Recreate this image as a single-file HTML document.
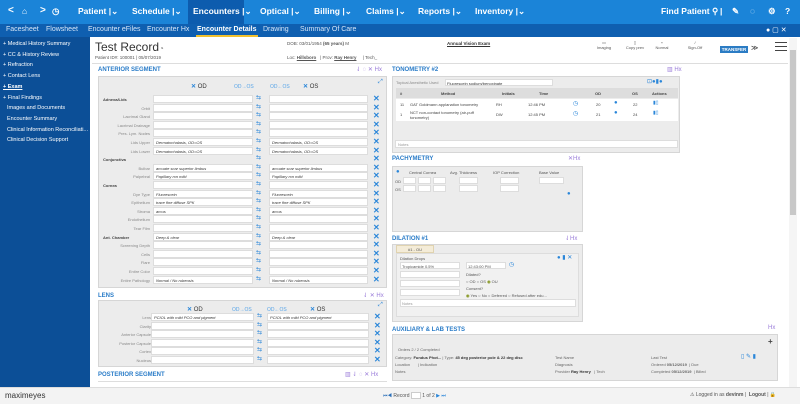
<!DOCTYPE html>
<html><head><meta charset="utf-8"><style>
*{box-sizing:border-box;margin:0;padding:0}
body{width:800px;height:404px;overflow:hidden;font-family:"Liberation Sans",sans-serif;background:#fff;position:relative;color:#333}
.a{position:absolute}
.top{left:0;top:0;width:800px;height:24px;background:#1b84d8}
.top span{position:absolute;top:6px;color:#fff;font-size:8.5px;font-weight:bold}
.sub{left:0;top:24px;width:800px;height:13px;background:#0f5fb0}
.sub span{position:absolute;top:2px;color:#d6e6f7;font-size:7px}
.side{left:0;top:37px;width:90px;height:350px;background:#0c4f97}
.side div{position:absolute;left:3px;color:#fff;font-size:5.5px;white-space:nowrap}
.foot{left:0;top:387px;width:800px;height:17px;background:#f3f3f3;border-top:1px solid #ddd}
.t{font-size:6px;color:#2a7cc8;font-weight:bold}
.panel{background:#ececec;border:1px solid #d6d6d6}
.r{position:absolute;left:0;width:289px;height:8px}
.l{position:absolute;left:0;width:52px;text-align:right;font-size:4px;color:#888;top:2px}
.s{position:absolute;left:5px;font-size:4px;color:#444;top:2px;font-weight:bold}
.in{position:absolute;top:0;height:8px;background:#fff;border:1px solid #ddd;font-size:4px;color:#333;padding:1px 2px;white-space:nowrap;overflow:hidden}
.ar{position:absolute;top:1px;left:158px;width:8px;height:5px;color:#2a86d9;font-size:6px;line-height:5px}
.x{position:absolute;top:0;left:275px;color:#2a86d9;font-size:8px;line-height:8px;font-weight:bold}
.sm{font-size:4.5px;color:#555}
.fi{position:absolute;background:#fff;border:1px solid #ddd}
</style></head><body>
<div class="a top">
<span style="left:8px;font-size:10px;top:5px">&lt;</span><span style="left:22px">⌂</span><span style="left:40px;font-size:10px;top:5px">&gt;</span><span style="left:52px">◷</span>
<span style="left:78px">Patient |⌄</span><span style="left:132px">Schedule |⌄</span>
<div class="a" style="left:188px;top:0;width:56px;height:24px;background:#0d5cae"></div>
<span style="left:193px">Encounters |⌄</span><span style="left:260px">Optical |⌄</span><span style="left:314px">Billing |⌄</span><span style="left:366px">Claims |⌄</span><span style="left:418px">Reports |⌄</span><span style="left:475px">Inventory |⌄</span>
<span style="left:661px">Find Patient ⚲</span><span style="left:720px">|</span><span style="left:732px">✎</span><span style="left:750px">◌</span><span style="left:768px">⚙</span><span style="left:785px">?</span>
</div>
<div class="a sub">
<span style="left:6px">Facesheet</span><span style="left:46px">Flowsheet</span><span style="left:88px">Encounter eFiles</span><span style="left:147px">Encounter Hx</span>
<span style="left:197px;color:#fff;font-weight:bold">Encounter Details</span><div class="a" style="left:196px;top:11px;width:62px;height:2px;background:#f2c12e"></div>
<span style="left:263px">Drawing</span><span style="left:300px">Summary Of Care</span>
<span style="left:766px;color:#fff">● ▢ ✕</span>
</div>
<div class="a side">
<div style="top:4px">+ Medical History Summary</div><div style="top:15px">+ CC &amp; History Review</div><div style="top:25px">+ Refraction</div><div style="top:36px">+ Contact Lens</div><div style="top:47px;font-weight:bold;text-decoration:underline">+ Exam</div><div style="top:58px">+ Final Findings</div>
<div style="top:68px;left:7px">Images and Documents</div><div style="top:79px;left:7px">Encounter Summary</div><div style="top:90px;left:7px">Clinical Information Reconciliati...</div><div style="top:100px;left:7px">Clinical Decision Support</div>
</div>
<div class="a" style="left:95px;top:40px;font-size:12px;color:#333">Test Record<span style="font-size:8px;color:#888">◔</span></div>
<div class="a sm" style="left:95px;top:55px">Patient ID#: 100001 | 05/07/2019</div>
<div class="a sm" style="left:287px;top:41px">DOB: 03/01/1954 <b>(65 years)</b> M</div>
<div class="a sm" style="left:287px;top:55px">Loc: <b><u>Hillsboro</u></b> &nbsp;&nbsp;| Prov: <b><u>Ray Henry</u></b> &nbsp;&nbsp;&nbsp;&nbsp;| Tech_</div>
<div class="a sm" style="left:447px;top:41px;font-weight:bold;text-decoration:underline;color:#333">Annual Vision Exam</div>
<div class="a sm" style="left:593px;top:40px;text-align:center;width:22px;font-size:4px">▭<br>Imaging</div>
<div class="a sm" style="left:622px;top:40px;text-align:center;width:26px;font-size:4px">▯<br>Copy prev</div>
<div class="a sm" style="left:652px;top:40px;text-align:center;width:20px;font-size:4px">⌁<br>Normal</div>
<div class="a sm" style="left:684px;top:40px;text-align:center;width:22px;font-size:4px">/<br>Sign-Off</div>
<div class="a" style="left:720px;top:46px;width:28px;height:7px;background:#2b7cc4;color:#fff;font-size:4.5px;font-weight:bold;text-align:center;line-height:7px">TRANSFER</div>
<div class="a" style="left:751px;top:44px;font-size:7px;color:#333">≫</div>
<div class="a" style="left:775px;top:42px;width:12px;height:9px;border-top:1.5px solid #444;border-bottom:1.5px solid #444"><div class="a" style="top:2.5px;left:0;width:12px;height:1.5px;background:#444"></div></div>
<div class="a" style="left:92px;top:63px;width:696px;height:1px;background:#ddd"></div>

<!-- Anterior -->
<div class="a t" style="left:98px;top:67px">ANTERIOR SEGMENT</div>
<div class="a" style="left:356px;top:66px;font-size:6px;color:#9a7cd9">⇃ ◌ ✕ Hx</div>
<div class="a panel" style="left:98px;top:76px;width:289px;height:212px">
<div class="a" style="left:92px;top:6px;font-size:6px"><b style="color:#2a86d9">✕</b> OD</div>
<div class="a" style="left:135px;top:7px;font-size:5px;color:#59a5e8">OD→OS</div>
<div class="a" style="left:171px;top:7px;font-size:5px;color:#59a5e8">OD←OS</div>
<div class="a" style="left:204px;top:6px;font-size:6px"><b style="color:#2a86d9">✕</b> OS</div>
<div class="a" style="left:279px;top:2px;font-size:6px;color:#2a86d9">⤢</div>
</div>
<div class="a" style="left:98px;top:95px;width:289px;height:190px">
<div class="r" style="top:0"><span class="s">Adnexa/Lids</span><i class="in" style="left:55px;width:100px"></i><span class="ar">⇆</span><i class="in" style="left:171px;width:99px"></i><b class="x">✕</b></div>
<div class="r" style="top:8.6px"><span class="l">Orbit</span><i class="in" style="left:55px;width:100px"></i><span class="ar">⇆</span><i class="in" style="left:171px;width:99px"></i><b class="x">✕</b></div>
<div class="r" style="top:17.2px"><span class="l">Lacrimal Gland</span><i class="in" style="left:55px;width:100px"></i><span class="ar">⇆</span><i class="in" style="left:171px;width:99px"></i><b class="x">✕</b></div>
<div class="r" style="top:25.8px"><span class="l">Lacrimal Drainage</span><i class="in" style="left:55px;width:100px"></i><span class="ar">⇆</span><i class="in" style="left:171px;width:99px"></i><b class="x">✕</b></div>
<div class="r" style="top:34.4px"><span class="l">Pres. Lym. Nodes</span><i class="in" style="left:55px;width:100px"></i><span class="ar">⇆</span><i class="in" style="left:171px;width:99px"></i><b class="x">✕</b></div>
<div class="r" style="top:43px"><span class="l">Lids Upper</span><i class="in" style="left:55px;width:100px">Dermatochalasis, OD=OS</i><span class="ar">⇆</span><i class="in" style="left:171px;width:99px">Dermatochalasis, OD=OS</i><b class="x">✕</b></div>
<div class="r" style="top:51.6px"><span class="l">Lids Lower</span><i class="in" style="left:55px;width:100px">Dermatochalasis, OD=OS</i><span class="ar">⇆</span><i class="in" style="left:171px;width:99px">Dermatochalasis, OD=OS</i><b class="x">✕</b></div>
<div class="r" style="top:60.2px"><span class="s">Conjunctiva</span><span class="ar">⇆</span><b class="x">✕</b></div>
<div class="r" style="top:68.8px"><span class="l">Bulbar</span><i class="in" style="left:55px;width:100px">arcuate scar superior limbus</i><span class="ar">⇆</span><i class="in" style="left:171px;width:99px">arcuate scar superior limbus</i><b class="x">✕</b></div>
<div class="r" style="top:77.4px"><span class="l">Palpebral</span><i class="in" style="left:55px;width:100px">Papillary rxn mild</i><span class="ar">⇆</span><i class="in" style="left:171px;width:99px">Papillary rxn mild</i><b class="x">✕</b></div>
<div class="r" style="top:86px"><span class="s">Cornea</span><i class="in" style="left:55px;width:100px"></i><span class="ar">⇆</span><i class="in" style="left:171px;width:99px"></i><b class="x">✕</b></div>
<div class="r" style="top:94.6px"><span class="l">Dye Type</span><i class="in" style="left:55px;width:100px">Fluorescein</i><span class="ar">⇆</span><i class="in" style="left:171px;width:99px">Fluorescein</i><b class="x">✕</b></div>
<div class="r" style="top:103.2px"><span class="l">Epithelium</span><i class="in" style="left:55px;width:100px">trace fine diffuse SPK</i><span class="ar">⇆</span><i class="in" style="left:171px;width:99px">trace fine diffuse SPK</i><b class="x">✕</b></div>
<div class="r" style="top:111.8px"><span class="l">Stroma</span><i class="in" style="left:55px;width:100px">arcus</i><span class="ar">⇆</span><i class="in" style="left:171px;width:99px">arcus</i><b class="x">✕</b></div>
<div class="r" style="top:120.4px"><span class="l">Endothelium</span><i class="in" style="left:55px;width:100px"></i><span class="ar">⇆</span><i class="in" style="left:171px;width:99px"></i><b class="x">✕</b></div>
<div class="r" style="top:129px"><span class="l">Tear Film</span><i class="in" style="left:55px;width:100px"></i><span class="ar">⇆</span><i class="in" style="left:171px;width:99px"></i><b class="x">✕</b></div>
<div class="r" style="top:137.6px"><span class="s">Ant. Chamber</span><i class="in" style="left:55px;width:100px">Deep &amp; clear</i><span class="ar">⇆</span><i class="in" style="left:171px;width:99px">Deep &amp; clear</i><b class="x">✕</b></div>
<div class="r" style="top:146.2px"><span class="l">Screening Depth</span><i class="in" style="left:55px;width:100px"></i><span class="ar">⇆</span><i class="in" style="left:171px;width:99px"></i><b class="x">✕</b></div>
<div class="r" style="top:154.8px"><span class="l">Cells</span><i class="in" style="left:55px;width:100px"></i><span class="ar">⇆</span><i class="in" style="left:171px;width:99px"></i><b class="x">✕</b></div>
<div class="r" style="top:163.4px"><span class="l">Flare</span><i class="in" style="left:55px;width:100px"></i><span class="ar">⇆</span><i class="in" style="left:171px;width:99px"></i><b class="x">✕</b></div>
<div class="r" style="top:172px"><span class="l">Entire Color</span><i class="in" style="left:55px;width:100px"></i><span class="ar">⇆</span><i class="in" style="left:171px;width:99px"></i><b class="x">✕</b></div>
<div class="r" style="top:180.6px"><span class="l">Entire Pathology</span><i class="in" style="left:55px;width:100px">Normal / No rubeosis</i><span class="ar">⇆</span><i class="in" style="left:171px;width:99px">Normal / No rubeosis</i><b class="x">✕</b></div>
</div>

<!-- Lens -->
<div class="a t" style="left:98px;top:293px">LENS</div>
<div class="a" style="left:363px;top:292px;font-size:6px;color:#9a7cd9">⇃ ✕ Hx</div>
<div class="a panel" style="left:98px;top:300px;width:289px;height:67px">
<div class="a" style="left:88px;top:5px;font-size:6px"><b style="color:#2a86d9">✕</b> OD</div>
<div class="a" style="left:133px;top:6px;font-size:5px;color:#59a5e8">OD→OS</div>
<div class="a" style="left:168px;top:6px;font-size:5px;color:#59a5e8">OD←OS</div>
<div class="a" style="left:211px;top:5px;font-size:6px"><b style="color:#2a86d9">✕</b> OS</div>
<div class="a" style="left:279px;top:1px;font-size:6px;color:#2a86d9">⤢</div>
<div class="r" style="top:12px"><span class="l">Lens</span><i class="in" style="left:52px;width:103px">PCIOL with mild PCO and pigment</i><span class="ar">⇆</span><i class="in" style="left:168px;width:102px">PCIOL with mild PCO and pigment</i><b class="x">✕</b></div>
<div class="r" style="top:20.6px"><span class="l">Clarity</span><i class="in" style="left:52px;width:103px"></i><span class="ar">⇆</span><i class="in" style="left:168px;width:102px"></i><b class="x">✕</b></div>
<div class="r" style="top:29.2px"><span class="l">Anterior Capsule</span><i class="in" style="left:52px;width:103px"></i><span class="ar">⇆</span><i class="in" style="left:168px;width:102px"></i><b class="x">✕</b></div>
<div class="r" style="top:37.8px"><span class="l">Posterior Capsule</span><i class="in" style="left:52px;width:103px"></i><span class="ar">⇆</span><i class="in" style="left:168px;width:102px"></i><b class="x">✕</b></div>
<div class="r" style="top:46.4px"><span class="l">Cortex</span><i class="in" style="left:52px;width:103px"></i><span class="ar">⇆</span><i class="in" style="left:168px;width:102px"></i><b class="x">✕</b></div>
<div class="r" style="top:55px"><span class="l">Nucleus</span><i class="in" style="left:52px;width:103px"></i><span class="ar">⇆</span><i class="in" style="left:168px;width:102px"></i><b class="x">✕</b></div>
</div>
<div class="a t" style="left:98px;top:372px">POSTERIOR SEGMENT</div>
<div class="a" style="left:345px;top:371px;font-size:6px;color:#9a7cd9">▥ ⇃ ◌ ✕ Hx</div>
<div class="a" style="left:98px;top:381px;width:289px;height:1px;background:#ddd"></div>

<!-- Tonometry -->
<div class="a t" style="left:392px;top:67px">TONOMETRY #2</div>
<div class="a" style="left:667px;top:66px;font-size:6px;color:#9a7cd9">▥ Hx</div>
<div class="a panel" style="left:392px;top:76px;width:288px;height:77px">
<div class="a" style="left:3px;top:3px;font-size:4px;color:#888">Topical Anesthetic Used</div>
<div class="fi" style="left:52px;top:2px;width:108px;height:7px;font-size:4px;padding:1px">Fluorescein sodium/benoxinate</div>
<div class="a" style="left:254px;top:1px;font-size:6px;color:#2a86d9">⊡●▮●</div>
<div class="a" style="left:3px;top:11px;width:282px;height:10px;background:#ddd;font-size:4px;font-weight:bold;color:#444">
<span class="a" style="left:4px;top:3px">#</span><span class="a" style="left:45px;top:3px">Method</span><span class="a" style="left:106px;top:3px">Initials</span><span class="a" style="left:143px;top:3px">Time</span><span class="a" style="left:199px;top:3px">OD</span><span class="a" style="left:236px;top:3px">OS</span><span class="a" style="left:256px;top:3px">Actions</span></div>
<div class="a" style="left:3px;top:22px;width:282px;height:22px;background:#fff;font-size:4px;color:#444">
<span class="a" style="left:4px;top:3px">11</span><span class="a" style="left:14px;top:3px">GAT Goldmann applanation tonometry</span><span class="a" style="left:100px;top:3px">RH</span><span class="a" style="left:132px;top:3px">12:46 PM</span><span class="a" style="left:177px;top:1px;color:#2a86d9;font-size:6px">◷</span><span class="a" style="left:200px;top:3px">20</span><span class="a" style="left:218px;top:1px;color:#2a86d9;font-size:6px">●</span><span class="a" style="left:237px;top:3px">22</span><span class="a" style="left:257px;top:1px;color:#2a86d9;font-size:5px">▮▯</span>
<span class="a" style="left:4px;top:13px">1</span><span class="a" style="left:14px;top:11px;width:80px">NCT non-contact tonometry (air-puff tonometry)</span><span class="a" style="left:100px;top:13px">DW</span><span class="a" style="left:132px;top:13px">12:45 PM</span><span class="a" style="left:177px;top:11px;color:#2a86d9;font-size:6px">◷</span><span class="a" style="left:200px;top:13px">21</span><span class="a" style="left:218px;top:11px;color:#2a86d9;font-size:6px">●</span><span class="a" style="left:237px;top:13px">24</span><span class="a" style="left:257px;top:11px;color:#2a86d9;font-size:5px">▮▯</span></div>
<div class="fi" style="left:2px;top:63px;width:283px;height:8px;font-size:4px;color:#999;padding:1px 2px">Notes</div>
</div>

<!-- Pachymetry -->
<div class="a t" style="left:392px;top:156px">PACHYMETRY</div>
<div class="a" style="left:568px;top:155px;font-size:6px;color:#9a7cd9">✕Hx</div>
<div class="a panel" style="left:392px;top:166px;width:191px;height:66px;font-size:4px;color:#555">
<span class="a" style="left:3px;top:2px;color:#2a86d9;font-size:6px">●</span><span class="a" style="left:16px;top:3px">Central Cornea</span><span class="a" style="left:57px;top:3px">Avg. Thickness</span><span class="a" style="left:100px;top:3px">IOP Correction</span><span class="a" style="left:146px;top:3px">Base Value</span>
<span class="a" style="left:2px;top:12px">OD</span><span class="a" style="left:2px;top:20px">OS</span>
<i class="fi" style="left:10px;top:10px;width:13px;height:7px"></i><i class="fi" style="left:25px;top:10px;width:13px;height:7px"></i><i class="fi" style="left:40px;top:10px;width:13px;height:7px"></i><i class="fi" style="left:66px;top:10px;width:19px;height:7px"></i><i class="fi" style="left:107px;top:10px;width:19px;height:7px"></i><i class="fi" style="left:146px;top:10px;width:25px;height:7px"></i>
<i class="fi" style="left:10px;top:18px;width:13px;height:7px"></i><i class="fi" style="left:25px;top:18px;width:13px;height:7px"></i><i class="fi" style="left:40px;top:18px;width:13px;height:7px"></i><i class="fi" style="left:66px;top:18px;width:19px;height:7px"></i><i class="fi" style="left:107px;top:18px;width:19px;height:7px"></i>
<span class="a" style="left:174px;top:24px;color:#2a86d9;font-size:6px">●</span>
</div>

<!-- Dilation -->
<div class="a t" style="left:392px;top:236px">DILATION #1</div>
<div class="a" style="left:565px;top:235px;font-size:6px;color:#9a7cd9">⇃Hx</div>
<div class="a panel" style="left:392px;top:244px;width:191px;height:78px;font-size:4px;color:#555">
<div class="a" style="left:3px;top:0;width:38px;height:8px;background:#f4ecd8;border:1px solid #e0d3b0;text-align:center;padding-top:1px">#1 - OU</div>
<div class="a" style="left:3px;top:8px;width:183px;height:64px;background:#f1f1f1;border:1px solid #ddd">
<span class="a" style="left:3px;top:2px">Dilation Drops</span><span class="a" style="left:160px;top:0;color:#2a86d9;font-size:6px">● ▮ ✕</span>
<i class="fi" style="left:3px;top:8px;width:60px;height:7px;font-style:normal;padding:1px">Tropicamide 0.5%</i>
<i class="fi" style="left:3px;top:17px;width:60px;height:7px"></i><i class="fi" style="left:3px;top:26px;width:60px;height:7px"></i><i class="fi" style="left:3px;top:35px;width:60px;height:7px"></i>
<i class="fi" style="left:69px;top:8px;width:40px;height:7px;font-style:normal;padding:1px">12:43:00 PM</i><span class="a" style="left:112px;top:7px;color:#2a86d9;font-size:6px">◷</span>
<span class="a" style="left:69px;top:18px">Dilated?</span><span class="a" style="left:69px;top:25px">○ OD ○ OS <b style="color:#8a9a2a">◉</b> OU</span>
<span class="a" style="left:69px;top:32px">Consent?</span><span class="a" style="left:69px;top:39px"><b style="color:#8a9a2a">◉</b> Yes ○ No ○ Deferred ○ Refused after edu...</span>
<i class="fi" style="left:3px;top:45px;width:176px;height:8px;font-style:normal;padding:1px;color:#999">Notes</i>
</div></div>

<!-- Aux -->
<div class="a t" style="left:392px;top:327px">AUXILIARY &amp; LAB TESTS</div>
<div class="a" style="left:768px;top:325px;font-size:6px;color:#9a7cd9">Hx</div>
<div class="a panel" style="left:392px;top:334px;width:386px;height:47px;font-size:4px;color:#666">
<span class="a" style="left:375px;top:2px;font-size:8px;color:#444;font-weight:bold">+</span>
<span class="a" style="left:5px;top:12px">Orders 2 / 2 Completed</span>
<span class="a" style="left:2px;top:20px">Category: <b style="color:#333">Fundus Phot...</b> | Type: <b style="color:#333">45 deg posterior pole &amp; 22 deg disc</b></span>
<span class="a" style="left:2px;top:27px">Location &nbsp;&nbsp;&nbsp;&nbsp;&nbsp;&nbsp;| Indication</span><span class="a" style="left:2px;top:34px">Notes</span>
<span class="a" style="left:162px;top:20px">Test Name</span><span class="a" style="left:162px;top:27px">Diagnosis</span><span class="a" style="left:162px;top:34px">Provider <b style="color:#333">Ray Henry</b> &nbsp;&nbsp;| Tech</span>
<span class="a" style="left:258px;top:20px">Last Test</span><span class="a" style="left:258px;top:27px">Ordered <b>05/12/2019</b> &nbsp;| Due</span><span class="a" style="left:258px;top:34px">Completed <b>05/12/2019</b> &nbsp;| Billed</span>
<span class="a" style="left:348px;top:18px;color:#2a86d9;font-size:6px">▯ ✎ ▮</span>
</div>

<!-- scrollbar -->
<div class="a" style="left:789px;top:38px;width:8px;height:349px;background:#f5f5f5"></div>
<div class="a" style="left:790px;top:50px;width:6px;height:165px;background:#c8c8c8"></div>

<div class="a foot">
<div class="a" style="left:5px;top:3px;font-size:8px;color:#333">maximeyes</div>
<div class="a" style="left:383px;top:4px;font-size:5px;color:#555"><span style="color:#2a6fb8">⏮◀</span> Record <span style="display:inline-block;width:10px;height:7px;border:1px solid #ccc;background:#fff;vertical-align:middle"></span> 1 of 2 <span style="color:#2a86d9">▶ ⏭</span></div>
<div class="a" style="left:690px;top:4px;font-size:5px;color:#555">⚠ Logged in as <b>devinm</b> | &nbsp;<b>Logout</b> | 🔒</div>
</div>
</body></html>
